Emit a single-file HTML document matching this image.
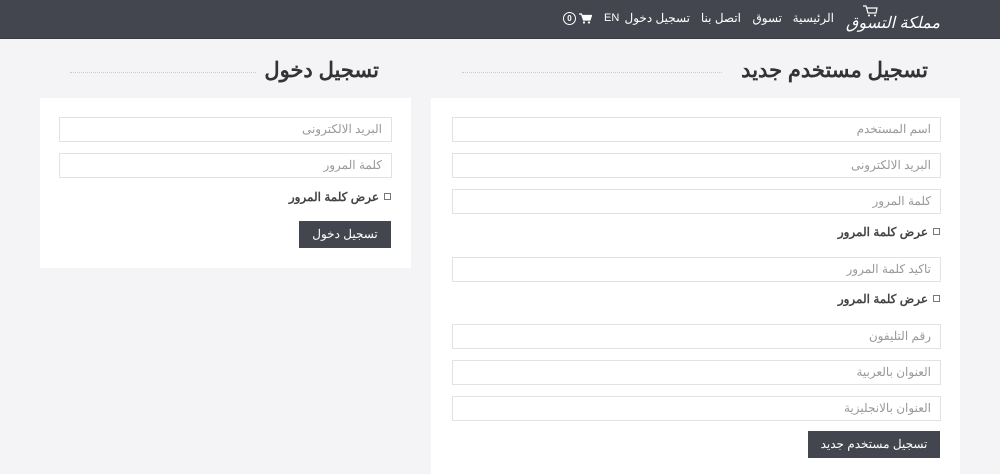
<!DOCTYPE html>
<html><head><meta charset="utf-8"><style>
*{margin:0;padding:0;box-sizing:border-box}
body{width:1000px;height:474px;background:#f4f4f6;font-family:"Liberation Sans","Noto Sans CJK SC",sans-serif;position:relative;overflow:hidden;color:#333}
.nav{position:absolute;left:0;top:0;width:1000px;height:39px;background:#43464e;border-bottom:1px solid #3a3d44}
.nav span{position:absolute;top:11px;color:#fff;font-size:12px;white-space:nowrap}
.panel{position:absolute;background:#fff}
.in{position:absolute;height:25px;border:1px solid #e2e2e2;background:#fff;font-size:12px;color:#999;text-align:right;padding-right:9px;line-height:23px;direction:rtl}
.cb{position:absolute;font-size:12px;font-weight:bold;color:#444;direction:rtl;white-space:nowrap}
.cb i{display:inline-block;width:7px;height:7px;border:1px solid #777;margin-left:5px;vertical-align:1px}
.btn{position:absolute;background:#43464e;color:#fff;font-size:12px;text-align:center;line-height:27px;height:27px}
h2{position:absolute;font-size:21px;font-weight:bold;color:#333;white-space:nowrap;direction:rtl}
.ln{position:absolute;height:0;border-top:1px dotted #ccc}
</style></head><body>
<div class="nav">
<span style="right:60px;top:13px;font-size:16px;font-style:italic">مملكة التسوق</span>
<svg style="position:absolute;left:862px;top:5px" width="16" height="12" viewBox="0 0 16 12"><path d="M1 1h3l2 7h8l1-5H5" fill="none" stroke="#fff" stroke-width="1.2"/><circle cx="7" cy="10.5" r="1" fill="#fff"/><circle cx="13" cy="10.5" r="1" fill="#fff"/></svg>
<span style="right:166px">الرئيسية</span>
<span style="right:218px">تسوق</span>
<span style="right:259px">اتصل بنا</span>
<span style="right:310px">تسجيل دخول</span>
<span style="left:604px;font-size:11px;top:12px">EN</span>
<svg style="position:absolute;left:579px;top:13px" width="13" height="11" viewBox="0 0 13 11"><path d="M0 1h2.5l2 6h6.5l1.5-4.5H3.5" fill="#fff" stroke="#fff" stroke-width="1.2"/><circle cx="5" cy="9.5" r="1.1" fill="#fff"/><circle cx="10" cy="9.5" r="1.1" fill="#fff"/></svg>
<span style="left:563px;top:12px;width:13px;height:13px;border:1px solid #fff;border-radius:50%;font-size:8px;text-align:center;line-height:11px;font-weight:bold">0</span>
</div>

<h2 style="right:72px;top:58px">تسجيل مستخدم جديد</h2>
<div class="ln" style="left:462px;width:260px;top:72px"></div>
<h2 style="right:621px;top:58px">تسجيل دخول</h2>
<div class="ln" style="left:70px;width:186px;top:72px"></div>

<div class="panel" style="left:431px;top:98px;width:529px;height:376px"></div>
<div class="in" style="left:452px;top:117px;width:489px">اسم المستخدم</div>
<div class="in" style="left:452px;top:153px;width:489px">البريد الالكترونى</div>
<div class="in" style="left:452px;top:189px;width:489px">كلمة المرور</div>
<div class="cb" style="right:60px;top:225px"><i></i>عرض كلمة المرور</div>
<div class="in" style="left:452px;top:257px;width:489px">تاكيد كلمة المرور</div>
<div class="cb" style="right:60px;top:292px"><i></i>عرض كلمة المرور</div>
<div class="in" style="left:452px;top:324px;width:489px">رقم التليفون</div>
<div class="in" style="left:452px;top:360px;width:489px">العنوان بالعربية</div>
<div class="in" style="left:452px;top:396px;width:489px">العنوان بالانجليزية</div>
<div class="btn" style="left:808px;top:431px;width:132px">تسجيل مستخدم جديد</div>

<div class="panel" style="left:40px;top:98px;width:371px;height:170px"></div>
<div class="in" style="left:59px;top:117px;width:333px">البريد الالكترونى</div>
<div class="in" style="left:59px;top:153px;width:333px">كلمة المرور</div>
<div class="cb" style="right:609px;top:190px"><i></i>عرض كلمة المرور</div>
<div class="btn" style="left:299px;top:221px;width:92px">تسجيل دخول</div>
</body></html>
